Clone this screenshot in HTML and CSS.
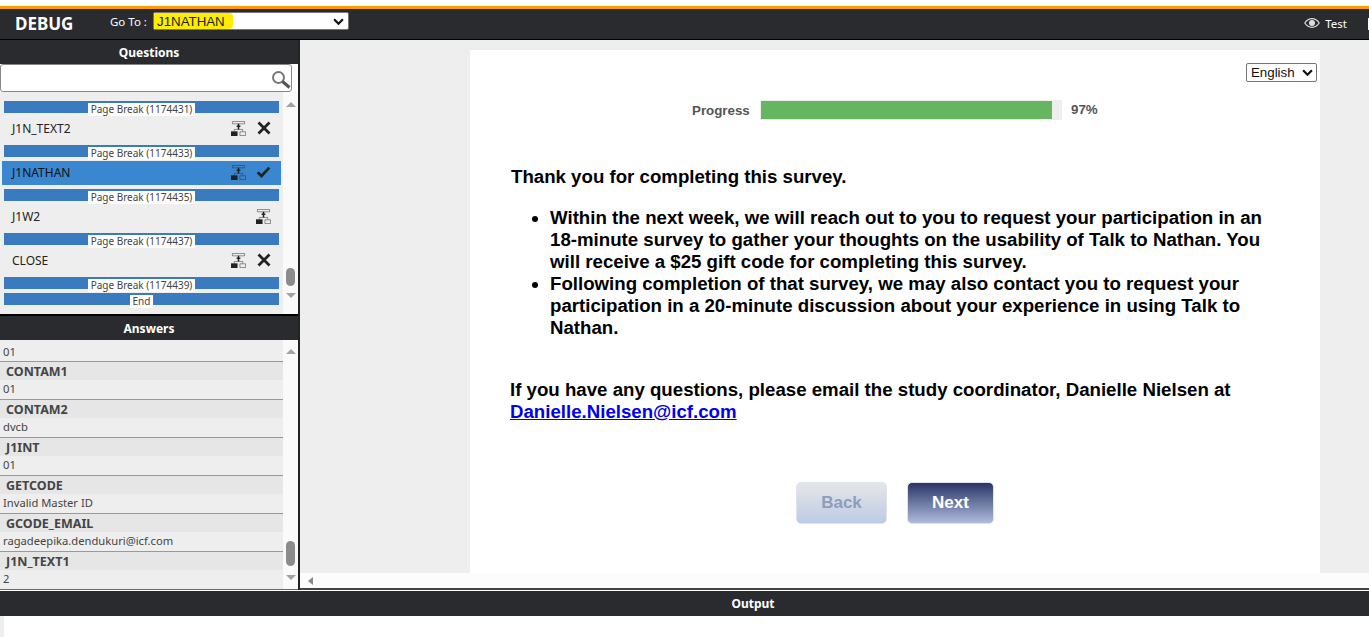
FILE: index.html

```html
<!DOCTYPE html>
<html lang="en">
    <head>
        <meta charset="utf-8">
        <meta name="viewport" content="width=device-width, initial-scale=1">
        <title>Debug</title>
        <link rel="stylesheet" href="styles.css">
    </head>

    <body>
        <svg class="icon-defs" width="0" height="0">
            <symbol id="i-logic" viewBox="0 0 16 16">
                <path d="M1.5 .5h13v2.5h-13z" fill="none" stroke="currentColor" stroke-opacity=".55"/>
                <path d="M8 3v6M6 5.5h4" fill="none" stroke="#222" stroke-width="1.6"/>
                <path d="M0 11h7v5h-7z" fill="#222"/>
                <path d="M9.5 11.5h6v4h-6z" fill="none" stroke="currentColor" stroke-opacity=".55"/>
                <path d="M3.5 11v-2h9v2" fill="none" stroke="currentColor" stroke-opacity=".55"/>
            </symbol>
            <symbol id="i-x" viewBox="0 0 14 14">
                <path d="M1.5 1.5l11 11M12.5 1.5l-11 11" fill="none" stroke="currentColor" stroke-width="2.8"/>
            </symbol>
            <symbol id="i-check" viewBox="0 0 14 12">
                <path d="M1.2 6.2l3.8 3.8l7.8-8.4" fill="none" stroke="currentColor" stroke-width="2.8"/>
            </symbol>
        </svg>

        <div class="stripe"></div>

        <header class="topbar">
            <div class="brand">DEBUG</div>
            <label class="goto">Go To :</label>
            <div class="goto-select">
                <span class="goto-value">J1NATHAN</span>
                <svg class="chev" viewBox="0 0 10 6"><path d="M1 1l4 4l4-4" fill="none" stroke="#111" stroke-width="2"/></svg>
            </div>
            <div class="test-link">
                <svg class="eye" viewBox="0 0 16 10"><path d="M.8 5c2-3 4.500-4.300 7.200-4.300S13.200 2 15.200 5c-2 3-4.500 4.300-7.200 4.300S2.800 8 .8 5z" fill="none" stroke="#ddd" stroke-width="1.200"/><circle cx="8" cy="5" r="3" fill="#ddd"/></svg>
                <span>Test</span>
            </div>
            <div class="edge-tab"></div>
        </header>

        <div class="workspace">
            <aside class="sidebar">
                <h2 class="panel-title">Questions</h2>
                <div class="search">
                    <svg class="search-icon" viewBox="0 0 20 20"><circle cx="7.500" cy="7.500" r="5.500" fill="none" stroke="#777" stroke-width="2"/><path d="M11.500 11.500l7 6" stroke="#555" stroke-width="3"/></svg>
                </div>
                <div class="question-pane">
                    <div class="question-list">
                        <div class="break"><span>Page Break (1174431)</span></div>
                        <div class="question">
                            <span class="q-name">J1N_TEXT2</span>
                            <svg class="i-logic"><use href="#i-logic"/></svg>
                            <svg class="i-x"><use href="#i-x"/></svg>
                        </div>
                        <div class="break"><span>Page Break (1174433)</span></div>
                        <div class="question selected">
                            <span class="q-name">J1NATHAN</span>
                            <svg class="i-logic"><use href="#i-logic"/></svg>
                            <svg class="i-check"><use href="#i-check"/></svg>
                        </div>
                        <div class="break"><span>Page Break (1174435)</span></div>
                        <div class="question">
                            <span class="q-name">J1W2</span>
                            <svg class="i-logic"><use href="#i-logic"/></svg>
                        </div>
                        <div class="break"><span>Page Break (1174437)</span></div>
                        <div class="question">
                            <span class="q-name">CLOSE</span>
                            <svg class="i-logic"><use href="#i-logic"/></svg>
                            <svg class="i-x"><use href="#i-x"/></svg>
                        </div>
                        <div class="break"><span>Page Break (1174439)</span></div>
                        <div class="break end"><span>End</span></div>
                    </div>
                    <div class="vscroll q-scroll">
                        <span class="arrow up"></span>
                        <span class="thumb q-thumb"></span>
                        <span class="arrow down"></span>
                    </div>
                </div>

                <h2 class="panel-title answers-title">Answers</h2>
                <div class="answer-pane">
                    <div class="answer-list">
                        <div class="a-value first">01</div>
                        <div class="a-name">CONTAM1</div>
                        <div class="a-value">01</div>
                        <div class="a-name">CONTAM2</div>
                        <div class="a-value">dvcb</div>
                        <div class="a-name">J1INT</div>
                        <div class="a-value">01</div>
                        <div class="a-name">GETCODE</div>
                        <div class="a-value">Invalid Master ID</div>
                        <div class="a-name">GCODE_EMAIL</div>
                        <div class="a-value">ragadeepika.dendukuri@icf.com</div>
                        <div class="a-name">J1N_TEXT1</div>
                        <div class="a-value">2</div>
                    </div>
                    <div class="vscroll a-scroll">
                        <span class="arrow up"></span>
                        <span class="thumb a-thumb"></span>
                        <span class="arrow down"></span>
                    </div>
                </div>
            </aside>

            <main class="preview">
                <div class="preview-scroll">
                    <section class="survey">
                        <div class="lang-row">
                            <div class="lang-select">
                                <span>English</span>
                                <svg class="chev" viewBox="0 0 10 6"><path d="M1 1l4 4l4-4" fill="none" stroke="#111" stroke-width="2"/></svg>
                            </div>
                        </div>
                        <div class="progress">
                            <span class="progress-label">Progress</span>
                            <div class="progress-track"><div class="progress-fill" style="width: 96.7%"></div></div>
                            <span class="progress-value">97%</span>
                        </div>
                        <div class="copy">
                            <p class="thanks">Thank you for completing this survey.</p>
                            <ul>
                                <li>Within the next week, we will reach out to you to request your participation in an 18-minute survey to gather your thoughts on the usability of Talk to Nathan. You will receive a $25 gift code for completing this survey.</li>
                                <li>Following completion of that survey, we may also contact you to request your participation in a 20-minute discussion about your experience in using Talk to Nathan.</li>
                            </ul>
                            <p class="contact">If you have any questions, please email the study coordinator, Danielle Nielsen at <a href="#">Danielle.Nielsen@icf.com</a></p>
                        </div>
                        <div class="nav-buttons">
                            <button class="btn back">Back</button>
                            <button class="btn next">Next</button>
                        </div>
                    </section>
                </div>
                <div class="hscroll"><span class="arrow left"></span></div>
            </main>
        </div>

        <div class="output-bar">Output</div>
        <div class="output-body"></div>
    </body>
</html>
```

FILE: styles.css

```css
/* page */
html, body {
    height: 100%;
}

body {
    margin: 0;
    height: 637px;
    overflow: hidden;
    background: #fff;
    display: flex;
    flex-direction: column;
    font-family: "Noto Sans", "DejaVu Sans", sans-serif;
    color: #222;
}

.icon-defs {
    position: absolute;
}

.stripe {
    height: 6px;
    border-bottom: 3px solid #f90;
    flex: none;
}

/* top bar */
.topbar {
    height: 30px;
    flex: none;
    display: flex;
    align-items: center;
    background: #2a2b2f;
    border-bottom: 1px solid #000;
    color: #fff;
    padding-left: 15px;
}

.brand {
    width: 95px;
    font-size: 17px;
    font-weight: 700;
    margin-top: -1px;
}

.goto {
    width: 43px;
    font-size: 11.500px;
    white-space: nowrap;
    margin-top: -6px;
}

.goto-select {
    width: 196px;
    height: 18px;
    box-sizing: border-box;
    background: #fff;
    border: 1px solid #777;
    border-radius: 2px;
    display: flex;
    align-items: center;
    justify-content: space-between;
    padding-right: 4px;
    margin-top: -6px;
    font-family: "Liberation Sans", Arial, sans-serif;
    font-size: 13.300px;
    color: #222;
}

.goto-value {
    background: #ffed00;
    padding: 1px 8px 0 3px;
    line-height: 15px;
    border-radius: 0 4px 4px 0;
}

.chev {
    width: 11px;
    height: 7px;
}

.test-link {
    margin-left: auto;
    margin-top: -2px;
    display: flex;
    align-items: center;
    gap: 5px;
    font-size: 11.500px;
}

.eye {
    width: 16px;
    height: 10px;
}

.edge-tab {
    width: 1px;
    height: 12px;
    background: #fff;
    margin-left: 21px;
}

/* layout */
.workspace {
    height: 550px;
    flex: none;
    display: flex;
}

.sidebar {
    width: 298px;
    flex: none;
    display: flex;
    flex-direction: column;
    background: #fff;
    border-right: 2px solid #222;
}

.panel-title {
    margin: 0;
    height: 24px;
    flex: none;
    background: #2a2b2f;
    color: #fff;
    text-align: center;
    font-size: 12px;
    line-height: 25px;
    font-weight: 700;
}

.answers-title {
    border-top: 2px solid #000;
}

.search {
    height: 28px;
    flex: none;
    box-sizing: border-box;
    margin: 0 6px 0 0;
    background: #fff;
    border: 1px solid #888;
    border-radius: 3px;
    display: flex;
    align-items: center;
    justify-content: flex-end;
    padding: 4px 0 0;
}

.search-icon {
    width: 20px;
    height: 20px;
}

/* question list */
.question-pane {
    height: 222px;
    flex: none;
    display: flex;
    background: #fff;
}

.question-list {
    width: 283px;
    height: 222px;
    box-sizing: border-box;
    padding-top: 9px;
    background: #eee;
    overflow: hidden;
}

.break {
    height: 12px;
    margin: 0 4px;
    background: #3a7abf;
    text-align: center;
    line-height: 0;
}

.break span {
    display: inline-block;
    height: 13px;
    padding: 0 3px;
    margin-top: 2px;
    background: #fff;
    color: #444;
    font-size: 10px;
    line-height: 13px;
    position: relative;
}

.end {
    margin-top: 4px;
}

.question {
    height: 32px;
    box-sizing: border-box;
    display: flex;
    align-items: center;
    padding: 0 12px 2px 12px;
    font-size: 12px;
    color: #222;
}

.q-name {
    flex: 1;
}

.selected {
    height: 24px;
    margin: 4px 2px;
    padding: 0 10px 2px 10px;
    background: #3a87cf;
    color: #111;
}

svg.i-logic {
    width: 15px;
    height: 15px;
    color: #333;
}

svg.i-x {
    width: 14px;
    height: 14px;
    margin-left: 11px;
    color: #222;
}

svg.i-check {
    width: 15px;
    height: 12px;
    margin-left: 10px;
    color: #222;
}

/* scrollbars */
.vscroll {
    width: 15px;
    flex: none;
    background: #fafafa;
    display: flex;
    flex-direction: column;
    align-items: center;
    box-sizing: border-box;
    position: relative;
}

.q-scroll {
    padding: 10px 0 16px;
}

.a-scroll {
    padding: 9px 0 9px;
}

.arrow {
    display: block;
    width: 0;
    height: 0;
    border-style: solid;
    border-color: transparent;
}

.arrow.up {
    border-width: 0 5px 5px;
    border-bottom-color: #a3a3a3;
}

.arrow.down {
    border-width: 5px 5px 0;
    border-top-color: #a3a3a3;
    margin-top: auto;
}

.arrow.left {
    border-width: 4px 5px 4px 0;
    border-right-color: #888;
}

.thumb {
    position: absolute;
    left: 3px;
    width: 9px;
    background: #8c8c8c;
    border-radius: 5px;
}

.q-thumb {
    top: 176px;
    height: 18px;
}

.a-thumb {
    top: 201px;
    height: 25px;
}

/* answers */
.answer-pane {
    flex: 1;
    min-height: 0;
    display: flex;
    background: #fff;
    border-bottom: 1px solid #666;
}

.answer-list {
    width: 283px;
    overflow: hidden;
    background: #eee;
    font-size: 11.200px;
}

.a-name {
    height: 18px;
    padding-left: 6px;
    background: #e6e6e6;
    color: #444;
    font-weight: 700;
    font-size: 12.500px;
    line-height: 19px;
}

.a-value {
    height: 19px;
    padding-left: 3px;
    border-bottom: 1px solid #999;
    color: #444;
    line-height: 18px;
}

.a-value.first {
    margin-top: 2px;
    line-height: 20px;
}

.a-value:last-child {
    border-bottom: none;
}

/* survey preview */
.preview {
    flex: 1;
    min-width: 0;
    display: flex;
    flex-direction: column;
    background: #eee;
    border-bottom: 2px solid #444;
}

.preview-scroll {
    flex: 1;
    min-height: 0;
    padding: 10px 0 0 170px;
    overflow: hidden;
}

.survey {
    width: 850px;
    height: 523px;
    box-sizing: border-box;
    background: #fff;
    font-family: "Liberation Sans", Arial, sans-serif;
}

.lang-row {
    display: flex;
    justify-content: flex-end;
    padding: 13px 3px 0 0;
}

.lang-select {
    width: 71px;
    height: 19px;
    box-sizing: border-box;
    border: 1px solid #767676;
    border-radius: 2px;
    display: flex;
    align-items: center;
    justify-content: space-between;
    padding: 0 3px 0 4px;
    font-size: 13.300px;
    color: #111;
}

.progress {
    display: flex;
    align-items: center;
    margin-top: 18px;
    padding-left: 222px;
    font-size: 13.333px;
    font-weight: 700;
    color: #555;
}

.progress-label {
    width: 68px;
}

.progress-track {
    width: 302px;
    height: 20px;
    box-sizing: border-box;
    padding: 1px 0 1px 1px;
    background: #eee;
}

.progress-fill {
    height: 18px;
    background: #66b560;
}

.progress-value {
    margin-left: 9px;
    margin-top: -2px;
}

.copy {
    margin-top: 46px;
    padding: 0 50px 0 40px;
    color: #000;
    font-size: 18.667px;
    line-height: 22px;
    font-weight: 700;
}

.copy p {
    margin: 0;
}

.thanks {
    padding-left: 1px;
}

.copy ul {
    margin: 19px 0 0;
    padding-left: 40px;
}

.contact {
    padding-top: 40px;
}

.copy a {
    color: #00e;
}

.nav-buttons {
    display: flex;
    justify-content: center;
    gap: 20px;
    margin-top: 59px;
}

.btn {
    height: 42px;
    border: 1px solid #dfe3ee;
    border-radius: 5px;
    font-family: inherit;
    font-size: 17px;
    font-weight: 700;
}

.back {
    width: 91px;
    background: linear-gradient(#e6e6e8, #bccbe4);
    color: #8d9dbc;
}

.next {
    width: 87px;
    background: linear-gradient(#2a3566, #aebcdc);
    color: #fff;
}

.hscroll {
    height: 15px;
    flex: none;
    background: #fcfcfc;
    display: flex;
    align-items: center;
    padding-left: 8px;
}

/* output */
.output-bar {
    height: 25px;
    flex: none;
    margin-top: 1px;
    padding-left: 137px;
    background: #2a2b2f;
    color: #fff;
    text-align: center;
    font-size: 12px;
    line-height: 25px;
    font-weight: 700;
}

.output-body {
    flex: 1;
    background: #fff;
    border-left: 4px solid #eee;
}
```
